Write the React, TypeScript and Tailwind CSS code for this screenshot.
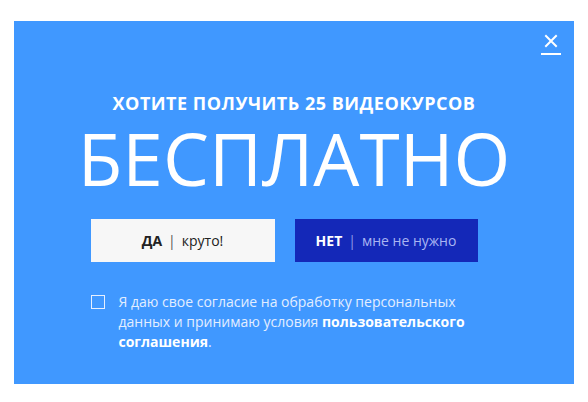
import React from 'react';

export default function App() {
  return (
    <div className="w-[588px] h-[402px] bg-white pt-[21px] pl-[14px]" style={{ fontFamily: '"Open Sans", "Noto Sans", sans-serif' }}>
      <div className="relative w-[560px] h-[363px] bg-[#4098ff] flex flex-col items-center pt-[69px]">
        <button className="absolute top-[13px] right-[13px] w-[20px] flex flex-col items-center">
          <svg width="14" height="14" viewBox="0 0 14 14" className="text-white">
            <path d="M2 2 L12 12 M12 2 L2 12" stroke="currentColor" strokeWidth="2" strokeLinecap="square" />
          </svg>
          <span className="block w-[20px] h-[2px] bg-white mt-[5px]" />
        </button>

        <h2 className="text-white font-bold text-[18px] leading-[26px] tracking-[0.5px]">ХОТИТЕ ПОЛУЧИТЬ 25 ВИДЕОКУРСОВ</h2>
        <h1 className="text-white font-normal text-[73px] leading-[84px] mt-[0px]">БЕСПЛАТНО</h1>

        <div className="flex flex-col mr-[20px]">
          <div className="flex gap-[20px] mt-[19px]">
            <button className="w-[184px] h-[43px] bg-[#f7f7f7] text-[#222] text-[14px] flex items-center justify-center">
              <span className="font-bold">ДА</span>
              <span className="mx-[6px] text-[#555]">|</span>
              <span>круто!</span>
            </button>
            <button className="w-[183px] h-[43px] bg-[#1428b8] text-[14px] flex items-center justify-center">
              <span className="font-bold text-white">НЕТ</span>
              <span className="mx-[6px] text-[#8f9de8]">|</span>
              <span className="text-[#a9b5f2]">мне не нужно</span>
            </button>
          </div>

          <label className="flex items-start gap-[14px] w-[387px] mt-[30px]">
            <span className="block w-[14px] h-[14px] border border-[#e6efff] mt-[3px] shrink-0" />
            <span className="text-[14px] leading-[20px] text-[#e3eeff]">
              Я даю свое согласие на обработку персональных данных и принимаю условия <b className="font-bold text-white">пользовательского соглашения</b>.
            </span>
          </label>
        </div>
      </div>
    </div>
  );
}
